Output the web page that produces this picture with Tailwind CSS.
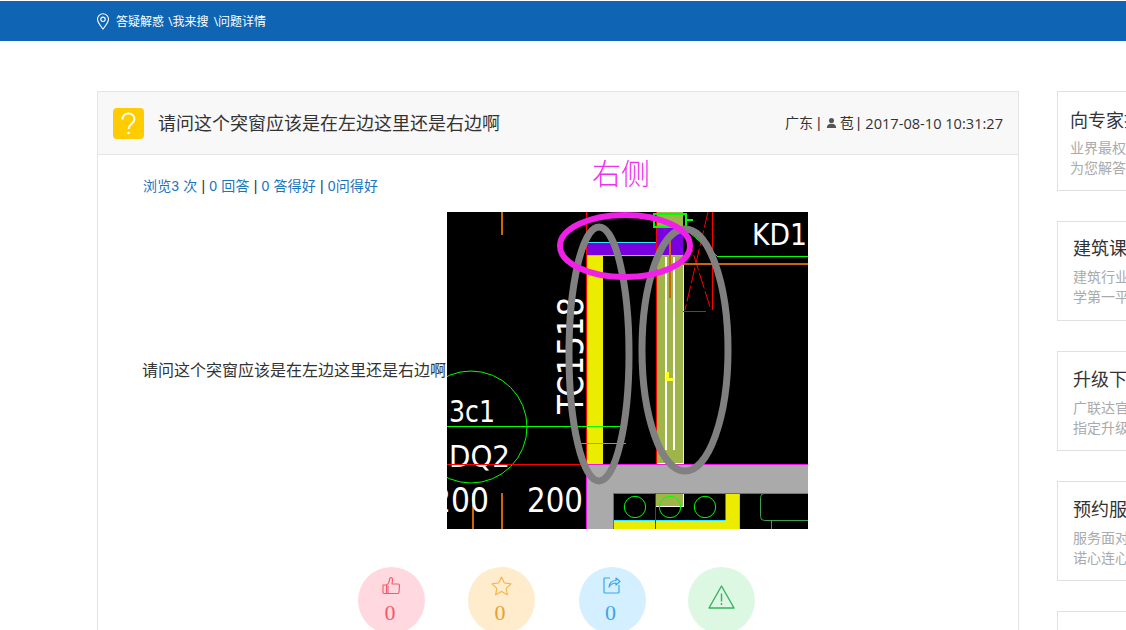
<!DOCTYPE html>
<html lang="zh-CN">
<head>
  <meta charset="UTF-8">
  <title>问题详情</title>
  <script src="https://cdn.jsdelivr.net/npm/@tailwindcss/browser@4"></script>
</head>
<body class="bg-white w-[1126px] h-[630px] overflow-hidden font-['Open_Sans','Noto_Sans_CJK_SC',sans-serif] text-[#333]">
  <!-- Top bar -->
  <div class="mt-px h-10 bg-[#0f65b3] flex items-center pl-[96px] text-white text-xs">
    <svg class="w-[14px] h-[17px] mr-[6px]" viewBox="0 0 14 17" fill="none" stroke="currentColor" stroke-width="1.1">
      <path d="M7 16C4 12 1.500 9.500 1.500 6.300a5.500 5.500 0 0 1 11 0C12.500 9.500 10 12 7 16z"/>
      <circle cx="7" cy="6.300" r="2.200"/>
    </svg>
    <span class="pt-[2px]">答疑解惑 <span class="ml-px">\</span>我来搜 <span class="ml-[2px]">\</span>问题详情</span>
  </div>

  <div class="flex items-start pl-[97px] pt-[50px] gap-[38px]">
    <!-- Question card -->
    <div class="w-[922px] shrink-0 h-[600px] border border-[#e5e5e5]">
      <div class="h-[63px] bg-[#f8f8f8] border-b border-[#e5e5e5] flex items-center pl-[15px] pr-[15px]">
        <div class="w-[31px] h-[31px] bg-[#ffcc00] rounded flex items-center justify-center">
          <svg class="w-[31px] h-[31px]" viewBox="0 0 31 31" fill="none" stroke="#fff" stroke-width="2">
            <path d="M9.500 11.500c0-4 2.800-6 6-6s6 2.200 6 5.500c0 4.500-6 5-6 10"/>
            <circle cx="15.500" cy="25" r="1.300" fill="#fff" stroke="none"/>
          </svg>
        </div>
        <h1 class="ml-[14px] text-lg leading-none">请问这个突窗应该是在左边这里还是右边啊</h1>
        <div class="ml-auto flex items-center text-sm font-['Liberation_Sans','Noto_Sans_CJK_SC',sans-serif]">
          <span>广东</span>
          <span class="ml-[4px]">|</span>
          <svg class="ml-[5px] w-[11px] h-[12px]" viewBox="0 0 13 13" fill="#555">
            <circle cx="6.500" cy="3.500" r="3"/>
            <path d="M1 12.500c0-3.500 2-5 5.500-5s5.500 1.500 5.500 5z"/>
          </svg>
          <span class="ml-[3px]">苞</span>
          <span class="ml-[3px]">|</span>
          <span class="ml-[5px] font-['Open_Sans',sans-serif] text-[14.6px]">2017-08-10 10:31:27</span>
        </div>
      </div>

      <div class="pl-[44px]">
        <div class="relative h-[57px]">
          <p class="pt-[21px] pl-px text-sm leading-5 tracking-[0.15px] text-[#1a75bb] font-['Liberation_Sans','Noto_Sans_CJK_SC',sans-serif]">浏览3 次 <span class="text-[#333]">|</span> 0 回答 <span class="text-[#333]">|</span> 0 答得好 <span class="text-[#333]">|</span> 0问得好</p>
          <p class="absolute left-[450px] top-[1px] text-[29px] leading-9 font-light text-[#f030f0]">右侧</p>
        </div>

        <div class="flex items-center">
          <span class="w-[305px] shrink-0 mb-[2px] text-base leading-6 whitespace-nowrap">请问这个突窗应该是在左边这里还是右边啊</span>
          <!-- CAD drawing -->
          <svg class="shrink-0 block bg-black" width="361" height="317" viewBox="0 0 361 317" fill="none" font-family="DejaVu Sans" shape-rendering="crispEdges">
            <rect x="139" y="44" width="17" height="208" fill="#ecec00"/>
            <rect x="209" y="0" width="27" height="252" fill="#9fb54a"/>
            <rect x="139" y="30" width="97" height="13" fill="#7a00e0"/>
            <rect x="209" y="15" width="27" height="28" fill="#7a00e0"/>
            <path d="M139 30.500H209M139 43.500H236" stroke="#30e8ff"/>
            <path d="M219 45V238M227 45V238M209 252H236" stroke="#fff" stroke-width="1.500"/>
            <path d="M236.500 44V252" stroke="#ffff30"/>
            <path d="M219 160H222V166H227V169H219z" fill="#ffff20"/>
            <path d="M139.500 0V252M209.500 0V252M265.500 0V98" stroke="#ff0000"/>
            <g shape-rendering="auto" stroke="#ff0000">
              <path d="M261 0L238 98M241 25L264 98" stroke-dasharray="16 3"/>
            </g>
            <path d="M236 99.500H259" stroke="#ff0000"/>
            <path d="M207 2H239V15H207zM239 7.500H246" stroke="#00ff00" stroke-width="2"/>
            <path d="M270 44.500H361" stroke="#00ff00"/>
            <path d="M243 21L270 44" stroke="#00ff00" shape-rendering="auto"/>
            <path d="M236 52H361" stroke="#cc6600" stroke-width="2"/>
            <path d="M223 28V86M55 0V23M55 281V317" stroke="#cc6600" stroke-width="2"/>
            <path d="M26 293V317" stroke="#cc6600" stroke-width="2"/>
            <path d="M26 281V293" stroke="#4499ff" stroke-width="2"/>

            <!-- slab -->
            <path d="M139 252H361V281H166V317H139z" fill="#aaaaaa"/>
            <rect x="209" y="281" width="27" height="13" fill="#9fb54a"/>
            <path d="M236.500 281V294.500H209" stroke="#fff"/>
            <path d="M166 308H278V281H292V317H166z" fill="#ecec00"/>
            <path d="M166 308.500H278M292.500 281V317" stroke="#30e8ff"/>
            <path d="M139.500 317V252.500H361M166.500 317V281.500H361M278.500 281V308" stroke="#f010f0"/>
            <path d="M208.500 281V317" stroke="#c01010"/>
            <g shape-rendering="auto" stroke="#00ff00">
              <circle cx="24" cy="215" r="56"/>
              <circle cx="188" cy="295" r="10.700"/>
              <circle cx="223" cy="295" r="10.700"/>
              <circle cx="258" cy="295" r="10.700"/>
            </g>
            <path d="M0 214.500H173M133 231.500H179" stroke="#00ff00"/>
            <rect x="313.500" y="281.500" width="60" height="27" rx="4" stroke="#3f9f4f" shape-rendering="auto"/>
            <path d="M324.500 308V317" stroke="#3f9f4f"/>

            <g fill="#fff" font-size="30" shape-rendering="auto">
              <text x="305" y="33" textLength="55" lengthAdjust="spacingAndGlyphs">KD1</text>
              <text x="2" y="210" textLength="46" lengthAdjust="spacingAndGlyphs">3c1</text>
              <text x="2" y="255" textLength="61" lengthAdjust="spacingAndGlyphs">DQ2</text>
              <text x="-15" y="300" font-size="33" textLength="57" lengthAdjust="spacingAndGlyphs">200</text>
              <text x="80" y="300" font-size="33" textLength="56" lengthAdjust="spacingAndGlyphs">200</text>
              <text transform="translate(136 202) rotate(-90)" font-size="35" textLength="117" lengthAdjust="spacingAndGlyphs">TC1518</text>
            </g>
            <path d="M0 252.500H139" stroke="#ff0000" stroke-width="1.500"/>

            <g shape-rendering="auto">
              <ellipse cx="152" cy="142" rx="30" ry="127" stroke="#808080" stroke-width="7"/>
              <ellipse cx="238" cy="138" rx="43" ry="121" stroke="#808080" stroke-width="7"/>
              <ellipse cx="178" cy="34" rx="65" ry="31" stroke="#f020e8" stroke-width="6"/>
            </g>
          </svg>
        </div>

        <!-- Actions -->
        <div class="flex pl-[216px] pt-[38px]">
          <div class="w-[67px] h-[67px] rounded-full bg-[#ffd9df] flex flex-col items-center pt-[9px] text-[#f5586d]">
            <svg class="w-[19px] h-[19px]" viewBox="0 0 19 19" fill="none" stroke="currentColor" stroke-width="1.100" stroke-linejoin="round">
              <path d="M1 9h3.500v8.500H2a1 1 0 0 1-1-1zM4.500 9c2-1 2.800-3 3-5 .1-1.500.3-2.500 1.500-2.500s1.500 1.200 1.500 2.500c0 1.500-.5 3-.5 4h6a1.500 1.500 0 0 1 1.500 1.500l-.5 6.500a1.500 1.500 0 0 1-1.500 1.500H4.500"/>
              <path d="M6 9.500V17"/>
            </svg>
            <span class="mt-[6px] mr-[3px] font-['Liberation_Serif',serif] text-[22px] leading-6">0</span>
          </div>
          <div class="ml-[43px] w-[67px] h-[67px] rounded-full bg-[#feeccc] flex flex-col items-center pt-[9px] text-[#e8a030]">
            <svg class="w-[21px] h-[20px]" viewBox="0 0 21 20" fill="none" stroke="#f4b44c" stroke-width="1.100" stroke-linejoin="round">
              <path d="M10.500 1l2.900 6 6.600.8-4.800 4.500 1.200 6.500-5.900-3.200-5.900 3.200 1.200-6.500L1 7.800 7.600 7z"/>
            </svg>
            <span class="mt-[5px] mr-[3px] font-['Liberation_Serif',serif] text-[22px] leading-6">0</span>
          </div>
          <div class="ml-[44px] w-[67px] h-[67px] rounded-full bg-[#d4efff] flex flex-col items-center pt-[9px] text-[#3ba6ea]">
            <svg class="w-[18px] h-[18px] mr-[2px]" viewBox="0 0 18 18" fill="none" stroke="currentColor" stroke-width="1.200" stroke-linejoin="round">
              <path d="M7 2H2a1 1 0 0 0-1 1v13a1 1 0 0 0 1 1h13a1 1 0 0 0 1-1V9"/>
              <path d="M6 11c.5-4 3-6.500 7-6.500V2l4 3.500L13 9V7c-3 0-5.500 1.500-7 4z"/>
            </svg>
            <span class="mt-[7px] mr-[4px] font-['Liberation_Serif',serif] text-[22px] leading-6">0</span>
          </div>
          <div class="ml-[42px] w-[67px] h-[67px] rounded-full bg-[#dcf8e2] flex justify-center pt-[18px]">
            <svg class="w-[27px] h-[24px]" viewBox="0 0 27 24" fill="none" stroke="#3cb061" stroke-width="1.400" stroke-linejoin="round">
              <path d="M13.500 1L1 23h25z"/>
              <path d="M13.500 8.500v8M13.500 18v2"/>
            </svg>
          </div>
        </div>
      </div>
    </div>

    <!-- Sidebar -->
    <div class="shrink-0 w-[200px] flex flex-col gap-[30px] whitespace-nowrap">
      <div class="h-[100px] border border-[#e0e0e0] pl-[12px] pt-[13px]">
        <p class="text-lg leading-[30px]">向专家提问</p>
        <p class="mt-[3px] text-sm leading-5 text-[#aaa]">业界最权威专家<br>为您解答</p>
      </div>
      <div class="h-[100px] border border-[#e0e0e0] pl-[15px] pt-[11px]">
        <p class="text-lg leading-[30px]">建筑课堂</p>
        <p class="mt-[4px] text-sm leading-5 text-[#aaa]">建筑行业培训<br>学第一平台</p>
      </div>
      <div class="h-[100px] border border-[#e0e0e0] pl-[15px] pt-[12px]">
        <p class="text-lg leading-[30px]">升级下载</p>
        <p class="mt-[4px] text-sm leading-5 text-[#aaa]">广联达官方<br>指定升级</p>
      </div>
      <div class="h-[100px] border border-[#e0e0e0] pl-[15px] pt-[12px]">
        <p class="text-lg leading-[30px]">预约服务</p>
        <p class="mt-[4px] text-sm leading-5 text-[#aaa]">服务面对面<br>诺心连心</p>
      </div>
      <div class="h-[100px] border border-[#e0e0e0]"></div>
    </div>
  </div>
</body>
</html>
